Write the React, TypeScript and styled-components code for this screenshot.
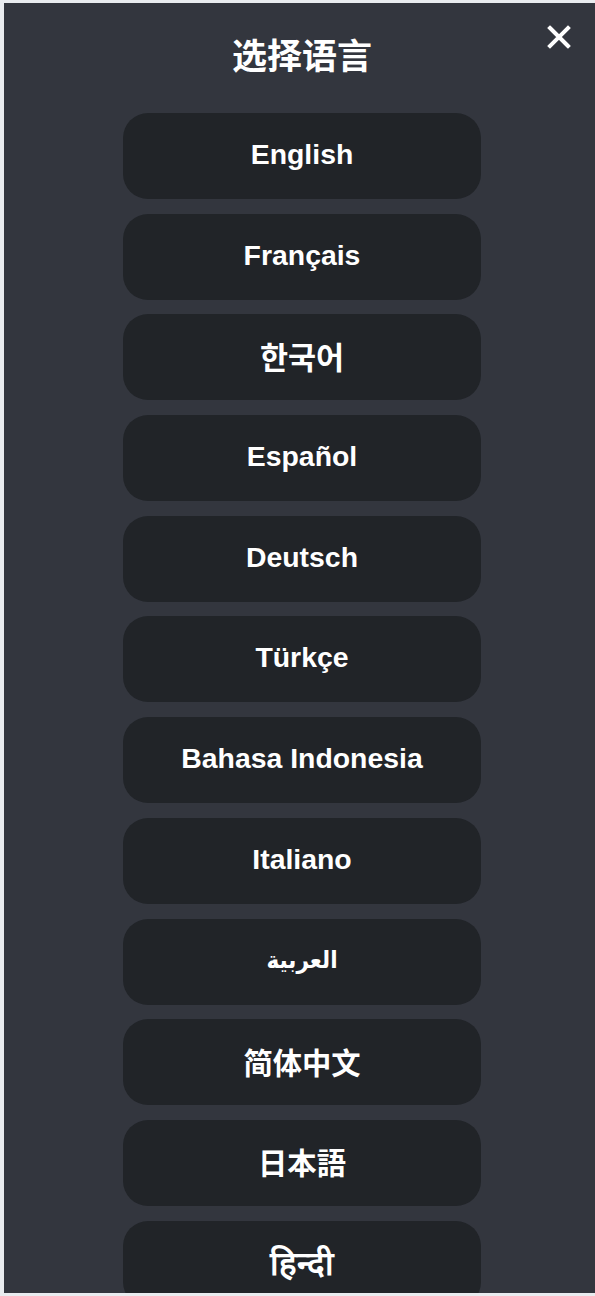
import React from "react";
import styled, { createGlobalStyle } from "styled-components";

const GlobalStyle = createGlobalStyle`
  html, body {
    margin: 0;
    padding: 0;
    background: #e9ecef;
    overflow: hidden;
  }
  * { box-sizing: border-box; }
`;

const Frame = styled.div`
  height: 1296px;
  padding: 3px 0 3px 4px;
  overflow: hidden;
`;

const Panel = styled.div`
  position: relative;
  width: 596px;
  height: 1290px;
  background: #33363e;
  display: flex;
  flex-direction: column;
  align-items: center;
  overflow: hidden;
  font-family: "Liberation Sans", "Noto Sans CJK SC", "DejaVu Sans", sans-serif;
`;

const Title = styled.h1`
  margin: 31px 0 0;
  height: 40px;
  line-height: 40px;
  font-size: 35px;
  font-weight: 700;
  color: #ffffff;
  font-family: "Noto Sans CJK SC", "Liberation Sans", sans-serif;
`;

const CloseButton = styled.button`
  position: absolute;
  top: 22px;
  right: 29px;
  width: 24px;
  height: 24px;
  padding: 0;
  border: 0;
  background: transparent;
  cursor: pointer;
  display: flex;
  align-items: center;
  justify-content: center;
`;

const List = styled.div`
  margin-top: 39px;
  display: flex;
  flex-direction: column;
  gap: 14.7px;
`;

const LangButton = styled.button<{ $font?: string; $size?: number }>`
  width: 358px;
  height: 86px;
  flex-shrink: 0;
  border: 0;
  border-radius: 25px;
  padding: 0 0 3px;
  background: #212428;
  color: #ffffff;
  font-size: ${(p) => p.$size ?? 28.4}px;
  font-weight: 700;
  font-family: ${(p) => p.$font ?? `"Liberation Sans", "Noto Sans CJK SC", "DejaVu Sans", sans-serif`};
  display: flex;
  align-items: center;
  justify-content: center;
  cursor: pointer;
`;

const languages: { label: string; lang: string; font?: string; size?: number }[] = [
  { label: "English", lang: "en" },
  { label: "Français", lang: "fr" },
  { label: "한국어", lang: "ko", font: `"Noto Sans CJK KR", sans-serif`, size: 30.5 },
  { label: "Español", lang: "es" },
  { label: "Deutsch", lang: "de" },
  { label: "Türkçe", lang: "tr" },
  { label: "Bahasa Indonesia", lang: "id" },
  { label: "Italiano", lang: "it" },
  { label: "العربية", lang: "ar", font: `"DejaVu Sans Condensed", "DejaVu Sans", sans-serif`, size: 24 },
  { label: "简体中文", lang: "zh-CN", font: `"Noto Sans CJK SC", sans-serif`, size: 29.3 },
  { label: "日本語", lang: "ja", font: `"Noto Sans CJK JP", sans-serif`, size: 29.3 },
  { label: "हिन्दी", lang: "hi", size: 33 },
];

export default function App() {
  return (
    <>
      <GlobalStyle />
      <Frame>
        <Panel>
          <Title>选择语言</Title>
          <CloseButton aria-label="close">
            <svg width="24" height="24" viewBox="0 0 24 24">
              <path d="M3 3 L21 21 M21 3 L3 21" stroke="#fff" strokeWidth="4" strokeLinecap="square" fill="none" />
            </svg>
          </CloseButton>
          <List>
            {languages.map((l) => (
              <LangButton key={l.lang} lang={l.lang} $font={l.font} $size={l.size}>
                {l.label}
              </LangButton>
            ))}
          </List>
        </Panel>
      </Frame>
    </>
  );
}
